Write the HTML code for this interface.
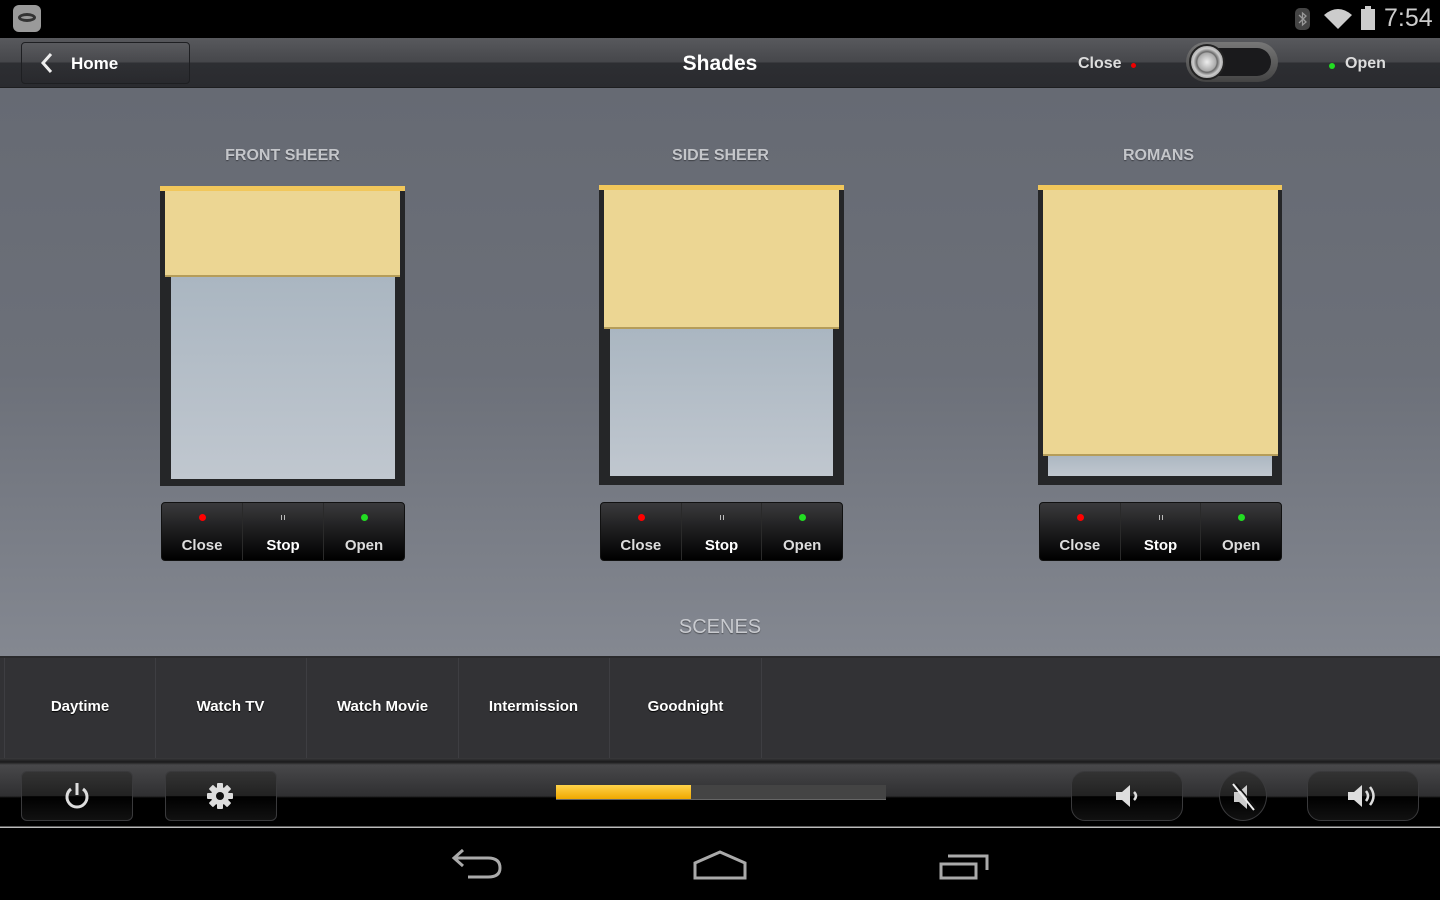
<!DOCTYPE html>
<html><head><meta charset="utf-8"><style>
*{margin:0;padding:0;box-sizing:border-box}
body{width:1440px;height:900px;overflow:hidden;background:#000;font-family:"Liberation Sans",sans-serif;position:relative}
.abs{position:absolute}
#status{left:0;top:0;width:1440px;height:38px;background:#000}
#title{left:0;top:38px;width:1440px;height:50px;background:linear-gradient(#58595d 0,#46474b 24px,#2d2e32 25px,#2a2b2f 49px,#111 50px)}
#main{left:0;top:88px;width:1440px;height:568px;background:linear-gradient(180deg,#666a73 0%,#6c7079 50%,#848891 100%)}
.lbl{color:#c4c6ca;font-weight:bold;font-size:16px;text-align:center;text-shadow:0 1px 1px rgba(0,0,0,.4)}
.frame{background:#252628;border-top:5px solid #f1c75b}
.fab{background:#ecd693;border-bottom:2px solid #b59d5a}
.glass{background:linear-gradient(#aab6c1,#c0c7cf)}
.btns{height:59px;border-radius:4px;background:linear-gradient(#3a3a3c 0,#1c1c1d 50%,#000 100%);display:flex;border:1px solid #111}
.btns div{flex:1;border-right:1px solid #2a2a2a;position:relative;color:#ddd;font-weight:bold;font-size:15px;text-align:center;padding-top:34px}
.btns div:last-child{border-right:none}
.dot{position:absolute;left:50%;top:11px;width:7px;height:7px;margin-left:-3px;border-radius:50%}
.pz{position:absolute;left:50%;top:12px;width:4px;height:5px;margin-left:-2px;border-left:1px solid #bbb;border-right:1px solid #bbb}
#scenes{left:0;top:656px;width:1440px;height:102px;background:#323235;border-top:2px solid #2a2a2c}
.sc{position:absolute;top:0;height:100px;width:152px;border-right:1px solid #3e3e42;color:#fff;font-weight:bold;font-size:15px;text-align:center;line-height:98px;text-shadow:0 1px 1px #000}
#bot{left:0;top:758px;width:1440px;height:70px;background:linear-gradient(#3a3a3c 0,#1a1a1b 4px,#48484a 7px,#2f2f31 38px,#000 40px,#000 68px,#bbb 69px)}
.bb{position:absolute;top:771px;height:50px;border:1px solid #3a3a3c;border-radius:6px;background:linear-gradient(#333 0,#222 50%,#000 51%,#111 100%)}
</style></head><body>
<div class="abs" id="status">
 <div class="abs" style="left:13px;top:5px;width:28px;height:27px;border-radius:6px;background:#9a9a9a"></div>
 <div class="abs" style="left:18px;top:13px;width:18px;height:9px;border-radius:50%;border:3px solid #333"></div>
 <div class="abs" style="left:1295px;top:8px;width:15px;height:22px;border-radius:5px;background:#444"></div>
 <svg class="abs" style="left:1297px;top:11px" width="11" height="16"><path d="M2 4 L9 11 L5.5 14 V2 L9 5 L2 12" stroke="#999" stroke-width="1.3" fill="none"/></svg>
 <svg class="abs" style="left:1323px;top:7px" width="30" height="24"><path d="M15 22 L1 8 Q15 -4 29 8 Z" fill="#ccc"/></svg>
 <div class="abs" style="left:1361px;top:9px;width:14px;height:21px;background:#ccc"></div>
 <div class="abs" style="left:1365px;top:6px;width:6px;height:3px;background:#ccc"></div>
 <div class="abs" style="left:1384px;top:4px;color:#ccc;font-size:25px">7:54</div>
</div>
<div class="abs" id="title">
 <div class="abs" style="left:21px;top:4px;width:169px;height:42px;border:1px solid #1e1f22;border-radius:4px;background:linear-gradient(rgba(255,255,255,.03),rgba(0,0,0,.05))"></div>
 <svg class="abs" style="left:40px;top:14px" width="14" height="22"><path d="M11 2 L3 11 L11 20" stroke="#eee" stroke-width="3" fill="none"/></svg>
 <div class="abs" style="left:71px;top:16px;color:#fff;font-weight:bold;font-size:17px">Home</div>
 <div class="abs" style="left:620px;top:14px;width:200px;text-align:center;color:#fff;font-weight:bold;font-size:21px">Shades</div>
 <div class="abs" style="left:1078px;top:17px;color:#ddd;font-weight:bold;font-size:16px">Close</div>
 <div class="abs" style="left:1131px;top:25px;width:5px;height:5px;border-radius:50%;background:#e00"></div>
 <div class="abs" style="left:1186px;top:4px;width:92px;height:40px;border-radius:20px;background:linear-gradient(#777,#444);"></div>
 <div class="abs" style="left:1191px;top:10px;width:80px;height:28px;border-radius:14px;background:#1a1a1c"></div>
 <div class="abs" style="left:1189px;top:6px;width:36px;height:36px;border-radius:50%;background:radial-gradient(#eee 0,#aaa 40%,#666 45%,#ccc 60%,#555 100%);border:2px solid #222"></div>
 <div class="abs" style="left:1329px;top:25px;width:6px;height:6px;border-radius:50%;background:#2d2"></div>
 <div class="abs" style="left:1345px;top:17px;color:#ddd;font-weight:bold;font-size:16px">Open</div>
</div>
<div class="abs" id="main"></div>

<div class="abs lbl" style="left:160px;top:147px;width:245px">FRONT SHEER</div>
<div class="abs lbl" style="left:598px;top:147px;width:245px">SIDE SHEER</div>
<div class="abs lbl" style="left:1036px;top:147px;width:245px">ROMANS</div>

<div class="abs frame" style="left:160px;top:186px;width:245px;height:300px"></div>
<div class="abs glass" style="left:171px;top:276px;width:224px;height:203px"></div>
<div class="abs fab" style="left:165px;top:191px;width:235px;height:86px"></div>

<div class="abs frame" style="left:599px;top:185px;width:245px;height:300px"></div>
<div class="abs glass" style="left:610px;top:328px;width:223px;height:148px"></div>
<div class="abs fab" style="left:604px;top:190px;width:235px;height:139px"></div>

<div class="abs frame" style="left:1038px;top:185px;width:244px;height:300px"></div>
<div class="abs glass" style="left:1048px;top:454px;width:224px;height:22px"></div>
<div class="abs fab" style="left:1043px;top:190px;width:235px;height:266px"></div>

<div class="abs btns" style="left:161px;top:502px;width:244px"><div><span class="dot" style="background:#f00"></span>Close</div><div><span class="pz"></span><span style="color:#fff">Stop</span></div><div><span class="dot" style="background:#2d2"></span>Open</div></div>
<div class="abs btns" style="left:600px;top:502px;width:243px"><div><span class="dot" style="background:#f00"></span>Close</div><div><span class="pz"></span><span style="color:#fff">Stop</span></div><div><span class="dot" style="background:#2d2"></span>Open</div></div>
<div class="abs btns" style="left:1039px;top:502px;width:243px"><div><span class="dot" style="background:#f00"></span>Close</div><div><span class="pz"></span><span style="color:#fff">Stop</span></div><div><span class="dot" style="background:#2d2"></span>Open</div></div>

<div class="abs lbl" style="left:620px;top:616px;width:200px;font-size:20px;font-weight:normal;color:#c8cacf">SCENES</div>

<div class="abs" id="scenes">
 <div class="sc" style="left:4px;border-left:1px solid #3e3e42">Daytime</div>
 <div class="sc" style="left:155px">Watch TV</div>
 <div class="sc" style="left:307px">Watch Movie</div>
 <div class="sc" style="left:458px">Intermission</div>
 <div class="sc" style="left:610px">Goodnight</div>
</div>

<div class="abs" id="bot"></div>
<div class="bb" style="left:21px;width:112px"></div>
<svg class="abs" style="left:63px;top:781px" width="28" height="30"><path d="M8 8 A10 10 0 1 0 20 8" stroke="#ddd" stroke-width="3" fill="none"/><path d="M14 2 V14" stroke="#ddd" stroke-width="3"/></svg>
<div class="bb" style="left:165px;width:112px"></div>
<svg class="abs" style="left:206px;top:782px" width="28" height="28"><g fill="#ddd"><circle cx="14" cy="14" r="9"/><rect x="11" y="1" width="6" height="26" rx="1"/><rect x="1" y="11" width="26" height="6" rx="1"/><rect x="11" y="1" width="6" height="26" rx="1" transform="rotate(45 14 14)"/><rect x="11" y="1" width="6" height="26" rx="1" transform="rotate(-45 14 14)"/></g><circle cx="14" cy="14" r="4" fill="#111"/></svg>
<div class="abs" style="left:556px;top:785px;width:330px;height:15px;background:#444;border-bottom:1px solid #666"></div>
<div class="abs" style="left:556px;top:785px;width:135px;height:14px;background:linear-gradient(#ffd34a,#f0a800)"></div>
<div class="bb" style="left:1071px;width:112px;border-radius:14px"></div>
<svg class="abs" style="left:1114px;top:783px" width="30" height="26"><path d="M2 9 H8 L16 2 V24 L8 17 H2 Z" fill="#ddd"/><path d="M20 9 Q24 13 20 17" stroke="#ddd" stroke-width="2.5" fill="none"/></svg>
<div class="bb" style="left:1219px;width:48px;border-radius:50%"></div>
<svg class="abs" style="left:1230px;top:782px" width="28" height="30"><path d="M4 10 H9 L17 3 V27 L9 20 H4 Z" fill="#ccc"/><path d="M3 2 L24 28" stroke="#eee" stroke-width="2"/><path d="M6 2 L26 26" stroke="#111" stroke-width="1.5"/></svg>
<div class="bb" style="left:1307px;width:112px;border-radius:14px"></div>
<svg class="abs" style="left:1346px;top:782px" width="36" height="28"><path d="M2 10 H8 L16 3 V25 L8 18 H2 Z" fill="#ddd"/><path d="M20 9 Q24 14 20 19" stroke="#ddd" stroke-width="2.5" fill="none"/><path d="M24 5 Q31 14 24 23" stroke="#ddd" stroke-width="2.5" fill="none"/></svg>

<svg class="abs" style="left:450px;top:848px" width="56" height="34"><path d="M4 10 H38 Q50 10 50 20 Q50 29 38 29 H18" stroke="#aaa" stroke-width="3" fill="none"/><path d="M13 2 L4 10 L13 18" stroke="#aaa" stroke-width="3" fill="none"/></svg>
<svg class="abs" style="left:690px;top:848px" width="60" height="34"><path d="M5 30 V15 L30 4 L55 15 V30 Z" stroke="#aaa" stroke-width="3" fill="none"/></svg>
<svg class="abs" style="left:936px;top:850px" width="56" height="32"><path d="M5 14 H40 V28 H5 Z" stroke="#aaa" stroke-width="3" fill="none"/><path d="M12 6 H51 V20" stroke="#aaa" stroke-width="3" fill="none"/></svg>
</body></html>
